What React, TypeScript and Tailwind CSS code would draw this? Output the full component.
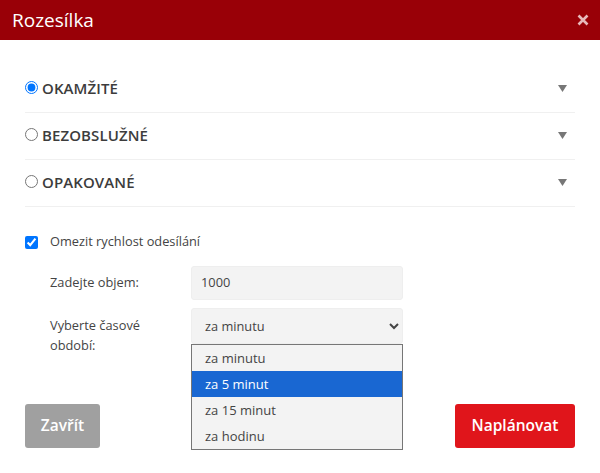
const modes = [
  { id: "okamzite", label: "OKAMŽITÉ", checked: true },
  { id: "bezobsluzne", label: "BEZOBSLUŽNÉ", checked: false },
  { id: "opakovane", label: "OPAKOVANÉ", checked: false },
];

const periods = ["za minutu", "za 5 minut", "za 15 minut", "za hodinu"];

export default function App() {
  return (
    <div className="w-[600px] h-[473px] bg-white overflow-hidden flex flex-col font-['Open_Sans',sans-serif] text-[#444]">
      <div className="h-10 shrink-0 bg-[#990007] flex items-center justify-between pl-3 pr-[11px]">
        <h1 className="text-[19px] text-white">Rozesílka</h1>
        <svg width="12" height="12" viewBox="0 0 12 12" className="text-[#e8b9bb]">
          <path d="M1.5 1.5 L10.5 10.5 M10.5 1.5 L1.5 10.5" stroke="currentColor" strokeWidth="2.6" />
        </svg>
      </div>

      <div className="px-[25px] pt-[26px] flex-1 flex flex-col">
        {modes.map((mode) => (
          <div key={mode.id} className="h-[47px] flex items-center justify-between border-b border-[#f0f0f0] pb-[1px]">
            <label className="flex items-center">
              <input type="radio" name="mode" defaultChecked={mode.checked} className="w-[13px] h-[13px] m-0 mr-[4px] mb-[3px]" />
              <span className="text-[15px] font-semibold tracking-[0.1px] text-[#3c3c3c]">{mode.label}</span>
            </label>
            <svg width="9" height="7" viewBox="0 0 9 7" className="mr-[8px] text-[#777]">
              <path d="M0 0 H9 L4.5 7 Z" fill="currentColor" />
            </svg>
          </div>
        ))}

        <label className="flex items-center mt-[26px] h-[18px] text-[12.8px]">
          <input type="checkbox" defaultChecked className="w-[13px] h-[13px] m-0 mr-3" />
          <span>Omezit rychlost odesílání</span>
        </label>

        <div className="flex items-center mt-[15px] pl-[25px]">
          <label className="w-[141px] text-[12.8px]">Zadejte objem:</label>
          <input
            defaultValue="1000"
            className="w-[212px] h-[34px] px-[9px] pb-[2px] text-[12.8px] bg-[#f3f3f3] border border-[#eeeeee] rounded-[3px] text-[#444]"
          />
        </div>

        <div className="flex mt-2 pl-[25px]">
          <label className="w-[141px] text-[12.8px] leading-[20px] pt-[7px]">
            Vyberte časové
            <br />
            období:
          </label>
          <div className="relative w-[212px]">
            <select className="w-full h-[36px] pl-[9px] text-[12.8px] bg-[#f3f3f3] border border-[#eeeeee] rounded-[3px] text-[#444]">
              {periods.map((p) => (
                <option key={p}>{p}</option>
              ))}
            </select>
            <ul className="absolute left-0 right-0 top-[36px] border border-[#767676] bg-[#f3f3f3] text-[13px]">
              {periods.map((p, i) => (
                <li key={p} className={`h-[26px] flex items-center pl-[13px] pt-[2px] ${i === 1 ? "bg-[#1967d2] text-white" : ""}`}>
                  {p}
                </li>
              ))}
            </ul>
          </div>
        </div>

        <div className="flex justify-between mt-auto mb-[25px]">
          <button className="w-[75px] h-[44px] rounded-[3px] bg-[#a0a0a0] text-white text-[15.5px] font-semibold">Zavřít</button>
          <button className="w-[120px] h-[44px] rounded-[3px] bg-[#e0151b] text-white text-[15.5px] font-semibold">Naplánovat</button>
        </div>
      </div>
    </div>
  );
}
